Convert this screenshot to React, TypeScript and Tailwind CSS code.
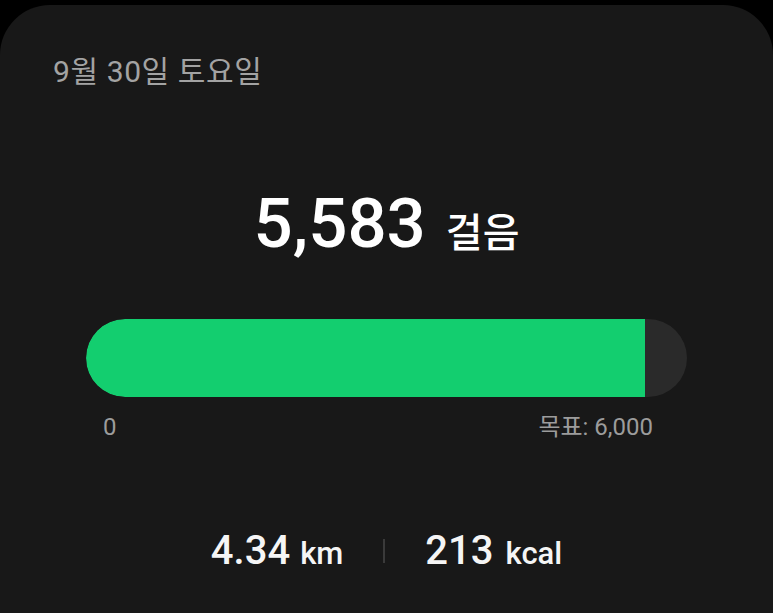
const font = { fontFamily: 'Roboto, "Noto Sans CJK KR", sans-serif' }

const steps = 5583
const goal = 6000

export default function App(): React.JSX.Element {
  const pct = Math.min(100, (steps / goal) * 100)

  return (
    <div className="h-[613px] w-[773px] overflow-hidden bg-black pt-[5px]" style={font}>
      <div className="flex h-full flex-col rounded-t-[50px] bg-[#181818]">
        {/* Date */}
        <div className="pl-[53px] pt-[52px] text-[30px] leading-[30px] tracking-[0.6px] text-[#a3a3a3]">
          9월 30일 토요일
        </div>

        {/* Step count */}
        <div className="mt-[102px] flex items-baseline justify-center gap-[20px] text-white">
          <span className="text-[69px] font-medium leading-[70px]">5,583</span>
          <span className="text-[40px] font-medium leading-[40px]">걸음</span>
        </div>

        {/* Progress bar */}
        <div className="mt-[60px] px-[86px]">
          <div className="h-[78px] overflow-hidden rounded-full bg-[#2a2a2a]">
            <div className="h-full rounded-l-full bg-[#13ce6f]" style={{ width: `${pct}%` }} />
          </div>
          <div className="mt-[18px] flex justify-between pl-[17px] pr-[34px] text-[24px] leading-[24px] text-[#9c9c9c]">
            <span>0</span>
            <span>목표: 6,000</span>
          </div>
        </div>

        {/* Distance / calories */}
        <div className="mt-[92px] flex items-center justify-center gap-[40px] text-[#f5f5f5]">
          <div className="flex items-baseline">
            <span className="text-[40px] font-medium leading-[40px]">4.34</span>
            <span className="ml-[10px] text-[31px] font-medium leading-[31px]">km</span>
          </div>
          <div className="h-[24px] w-[2px] bg-[#3a3a3a]" />
          <div className="flex items-baseline">
            <span className="text-[40px] font-medium leading-[40px]">213</span>
            <span className="ml-[12px] text-[31px] font-medium leading-[31px]">kcal</span>
          </div>
        </div>
      </div>
    </div>
  )
}
